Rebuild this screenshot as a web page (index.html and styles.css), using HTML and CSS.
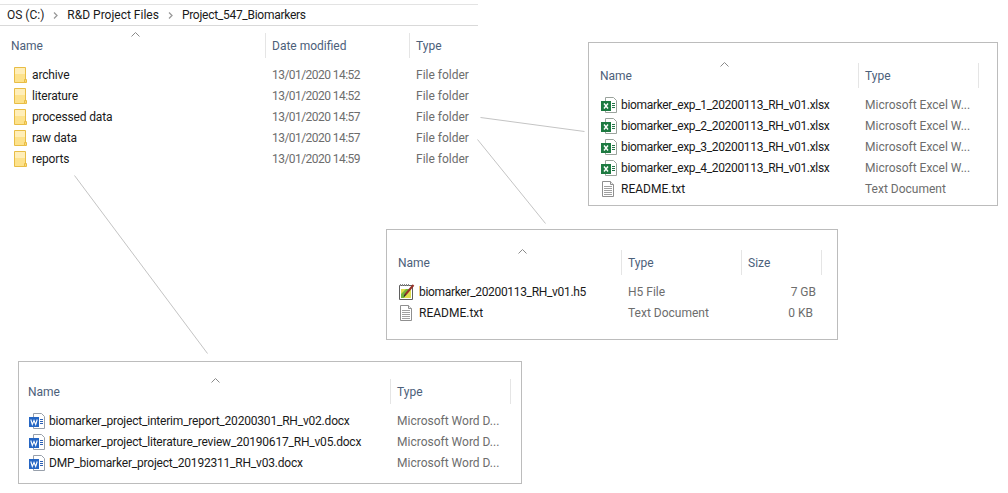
FILE: index.html
```html
<!DOCTYPE html>
<html lang="en">
<head>
<meta charset="utf-8">
<title>Project_547_Biomarkers</title>
<link rel="stylesheet" href="styles.css">
</head>
<body>
<svg class="defs" width="0" height="0" aria-hidden="true">
  <symbol id="folder" viewBox="0 0 16 16">
    <path d="M3.500 .5H14.500V15.500H3.500Z" fill="#fde28c" stroke="#e8bd45"/>
    <path d="M4 1H14V7H4Z" fill="#ffeeb8"/>
    <path d="M13.500 12.500H15.500V15.500H13.500Z" fill="#fcd877" stroke="#e8bd45"/>
  </symbol>
  <symbol id="doc" viewBox="0 0 17 16">
    <path d="M2.500 .5H10.500L13.500 3.500V15.500H2.500Z" fill="#fff" stroke="#8f8f8f"/>
    <path d="M10.500 .5V3.500H13.500" fill="#eee" stroke="#8f8f8f"/>
    <path d="M4 5.500H12M4 7.500H12M4 9.500H12M4 11.500H12M4 13.500H12" stroke="#a0a0a0"/>
  </symbol>
  <symbol id="xlsx" viewBox="0 0 17 16">
    <path d="M5.500 .5H13.500L16.500 3.500V15.500H5.500Z" fill="#fff" stroke="#9aa39c"/>
    <path d="M12 6.500H15M12 8.500H15M12 10.500H15" stroke="#217346"/>
    <rect x="1" y="4" width="10" height="10" fill="#1d7a41"/>
    <path d="M4 6.500L8 11.500M8 6.500L4 11.500" stroke="#fff" stroke-width="1.4"/>
  </symbol>
  <symbol id="docx" viewBox="0 0 17 16">
    <path d="M5.500 .5H13.500L16.500 3.500V15.500H5.500Z" fill="#fff" stroke="#98a0ab"/>
    <path d="M12 6.500H15M12 8.500H15M12 10.500H15" stroke="#2b5fb4"/>
    <rect x="1" y="4" width="10" height="10" fill="#2566c4"/>
    <path d="M2.800 6.500L4.300 11.500L6 7.500L7.700 11.500L9.200 6.500" fill="none" stroke="#fff" stroke-width="1.100"/>
  </symbol>
  <symbol id="h5" viewBox="0 0 17 16">
    <path d="M1.500 1.500H14.500V15.500H1.500Z" fill="#fff" stroke="#5f5f5f"/>
    <path d="M2 1H12" stroke="#8a8a8a" stroke-dasharray="1 1" stroke-width="2"/>
    <path d="M3 5H13V14H3Z" fill="#dfe04f"/>
    <path d="M3 10L8 5H11L6 14H3Z" fill="#74b53a"/>
    <path d="M7 11L15.500 1" stroke="#96322a" stroke-width="2"/>
    <path d="M7.500 10.500L6 12.500" stroke="#222" stroke-width="1.200"/>
  </symbol>
  <symbol id="chev" viewBox="0 0 9 5">
    <path d="M.5 4.500L4.500 .5L8.500 4.500" fill="none" stroke="#8a8a8a"/>
  </symbol>
  <symbol id="crumb" viewBox="0 0 5 7">
    <path d="M1 .5L4 3.500L1 6.500" fill="none" stroke="#9a9a9a" stroke-width="1.300"/>
  </symbol>
</svg>

<svg class="connectors" width="1008" height="493" aria-hidden="true">
  <path d="M480.500 117.500L584.500 131.500M477.500 139.500L545.500 223.500M74.500 175.500L207.500 353.500"/>
</svg>

<section class="explorer">
  <nav class="crumbs">
    <span>OS (C:)</span><svg class="crumb-sep"><use href="#crumb"/></svg>
    <span>R&amp;D Project Files</span><svg class="crumb-sep"><use href="#crumb"/></svg>
    <span class="crumb-last">Project_547_Biomarkers</span>
  </nav>
  <div class="table cols-main">
    <div class="row head">
      <span class="name">Name</span><span class="cell">Date modified</span><span class="cell">Type</span>
      <svg class="sort"><use href="#chev"/></svg>
    </div>
    <div class="row"><span class="name"><svg class="ico"><use href="#folder"/></svg>archive</span><span class="meta date">13/01/2020 14:52</span><span class="meta">File folder</span></div>
    <div class="row"><span class="name"><svg class="ico"><use href="#folder"/></svg>literature</span><span class="meta date">13/01/2020 14:52</span><span class="meta">File folder</span></div>
    <div class="row"><span class="name"><svg class="ico"><use href="#folder"/></svg>processed data</span><span class="meta date">13/01/2020 14:57</span><span class="meta">File folder</span></div>
    <div class="row"><span class="name"><svg class="ico"><use href="#folder"/></svg>raw data</span><span class="meta date">13/01/2020 14:57</span><span class="meta">File folder</span></div>
    <div class="row"><span class="name"><svg class="ico"><use href="#folder"/></svg>reports</span><span class="meta date">13/01/2020 14:59</span><span class="meta">File folder</span></div>
  </div>
</section>

<section class="panel panel-processed">
  <div class="table cols-two-a">
    <div class="row head">
      <span class="name">Name</span><span class="cell">Type</span><span class="cell end"></span>
      <svg class="sort"><use href="#chev"/></svg>
    </div>
    <div class="row"><span class="name"><svg class="ico"><use href="#xlsx"/></svg>biomarker_exp_1_20200113_RH_v01.xlsx</span><span class="meta">Microsoft Excel W...</span></div>
    <div class="row"><span class="name"><svg class="ico"><use href="#xlsx"/></svg>biomarker_exp_2_20200113_RH_v01.xlsx</span><span class="meta">Microsoft Excel W...</span></div>
    <div class="row"><span class="name"><svg class="ico"><use href="#xlsx"/></svg>biomarker_exp_3_20200113_RH_v01.xlsx</span><span class="meta">Microsoft Excel W...</span></div>
    <div class="row"><span class="name"><svg class="ico"><use href="#xlsx"/></svg>biomarker_exp_4_20200113_RH_v01.xlsx</span><span class="meta">Microsoft Excel W...</span></div>
    <div class="row"><span class="name plain"><svg class="ico"><use href="#doc"/></svg>README.txt</span><span class="meta">Text Document</span></div>
  </div>
</section>

<section class="panel panel-raw">
  <div class="table cols-three">
    <div class="row head">
      <span class="name">Name</span><span class="cell">Type</span><span class="cell">Size</span><span class="cell end"></span>
      <svg class="sort"><use href="#chev"/></svg>
    </div>
    <div class="row"><span class="name"><svg class="ico"><use href="#h5"/></svg>biomarker_20200113_RH_v01.h5</span><span class="meta">H5 File</span><span class="meta size">7 GB</span></div>
    <div class="row"><span class="name plain"><svg class="ico"><use href="#doc"/></svg>README.txt</span><span class="meta">Text Document</span><span class="meta size size-kb">0 KB</span></div>
  </div>
</section>

<section class="panel panel-reports">
  <div class="table cols-two-b">
    <div class="row head">
      <span class="name">Name</span><span class="cell">Type</span><span class="cell end"></span>
      <svg class="sort"><use href="#chev"/></svg>
    </div>
    <div class="row"><span class="name"><svg class="ico"><use href="#docx"/></svg>biomarker_project_interim_report_20200301_RH_v02.docx</span><span class="meta">Microsoft Word D...</span></div>
    <div class="row"><span class="name"><svg class="ico"><use href="#docx"/></svg>biomarker_project_literature_review_20190617_RH_v05.docx</span><span class="meta">Microsoft Word D...</span></div>
    <div class="row"><span class="name"><svg class="ico"><use href="#docx"/></svg>DMP_biomarker_project_20192311_RH_v03.docx</span><span class="meta">Microsoft Word D...</span></div>
  </div>
</section>
</body>
</html>
```
FILE: styles.css
```css
* { box-sizing: border-box; }
html, body { margin: 0; height: 493px; overflow: hidden; background: #fff; }
body {
  position: relative;
  font: 12px/16px Roboto, "Noto Sans", sans-serif;
  color: #1a1a1a;
}
.defs { position: absolute; }
.connectors { position: absolute; left: 0; top: 0; }
.connectors path { fill: none; stroke: #c4c4c4; stroke-width: 1; }

/* Each window sits at its own place on the canvas */
.explorer { position: absolute; left: 0; top: 4px; width: 478px; }
.panel { position: absolute; border: 1px solid #bcbcbc; background: #fff; }
.panel-processed { left: 588px; top: 42px; width: 410px; height: 164px; padding: 20px 0 0 11px; }
.panel-raw { left: 386px; top: 229px; width: 452px; height: 111px; padding: 20px 0 0 11px; }
.panel-reports { left: 18px; top: 361px; width: 504px; height: 123px; padding: 17px 0 0 9px; }

.crumbs {
  display: flex; align-items: center; gap: 8px;
  height: 22px; padding: 0 0 1px 7px;
  border-top: 1px solid #e3e3e3; border-bottom: 1px solid #d9d9d9;
}
.crumb-sep { width: 5px; height: 7px; margin: 1px 1px 0; }
.crumb-last { letter-spacing: -.27px; }

.table { position: relative; }
.explorer .table { margin-top: 7px; padding-left: 11px; }
.row { display: grid; height: 21px; align-items: center; white-space: nowrap; }
.head { position: relative; height: 25px; margin-bottom: 6px; color: #4c607a; align-items: stretch; }
.head .name { display: flex; align-items: center; }
.cell { display: flex; align-items: center; padding-left: 6px; border-left: 1px solid #e5e5e5; }
.cell.end { padding: 0; }
.cols-main .row { grid-template-columns: 254px 144px 68px; }
.cols-two-a .row { grid-template-columns: 258px 120px 1px; }
.cols-three .row { grid-template-columns: 223px 120px 80px 1px; }
.cols-two-b .row { grid-template-columns: 362px 120px 1px; }

.name { display: flex; align-items: center; }
.cols-main .name { letter-spacing: -.15px; }
.cols-two-a .name { letter-spacing: -.33px; }
.cols-three .name { letter-spacing: -.32px; }
.cols-two-b .name { letter-spacing: -.2px; }
.head .name, .row .plain { letter-spacing: 0; }
.ico { flex: none; width: 17px; height: 16px; margin-right: 4px; }
.meta { padding-left: 7px; color: #6d6d6d; }
.date { letter-spacing: -.55px; }
.size { padding: 0 5px 0 0; text-align: right; }
.size-kb { padding-right: 8px; }
.cols-main .ico { width: 16px; margin: 0 5px 0 0; }

.sort { position: absolute; width: 9px; height: 5px; top: -1px; }
.cols-main .sort { left: 120px; }
.cols-two-a .sort { left: 120px; }
.cols-three .sort { left: 120px; }
.cols-two-b .sort { left: 183px; }
```
